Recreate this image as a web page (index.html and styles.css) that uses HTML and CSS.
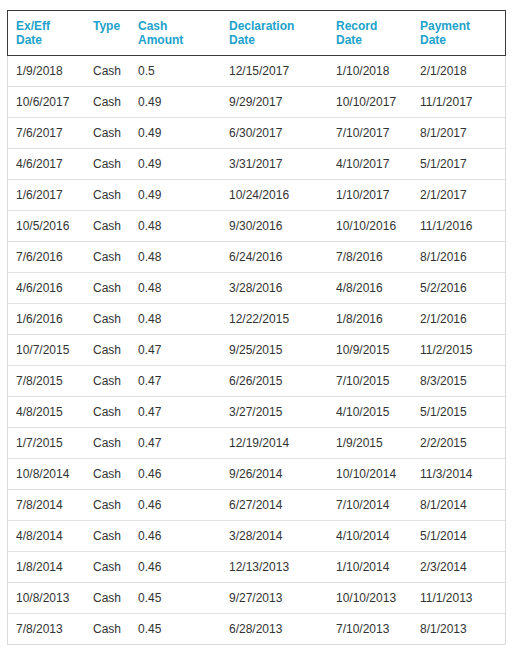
FILE: index.html
```
<!DOCTYPE html>
<html>
<head>
<meta charset="utf-8">
<link rel="stylesheet" href="styles.css">
</head>
<body>
<div class="tbl">
  <div class="row head">
    <div class="c">Ex/Eff<br>Date</div>
    <div class="c">Type</div>
    <div class="c">Cash<br>Amount</div>
    <div class="c">Declaration<br>Date</div>
    <div class="c">Record<br>Date</div>
    <div class="c">Payment<br>Date</div>
  </div>
  <div class="body">
    <div class="row"><div class="c">1/9/2018</div><div class="c">Cash</div><div class="c">0.5</div><div class="c">12/15/2017</div><div class="c">1/10/2018</div><div class="c">2/1/2018</div></div>
    <div class="row"><div class="c">10/6/2017</div><div class="c">Cash</div><div class="c">0.49</div><div class="c">9/29/2017</div><div class="c">10/10/2017</div><div class="c">11/1/2017</div></div>
    <div class="row"><div class="c">7/6/2017</div><div class="c">Cash</div><div class="c">0.49</div><div class="c">6/30/2017</div><div class="c">7/10/2017</div><div class="c">8/1/2017</div></div>
    <div class="row"><div class="c">4/6/2017</div><div class="c">Cash</div><div class="c">0.49</div><div class="c">3/31/2017</div><div class="c">4/10/2017</div><div class="c">5/1/2017</div></div>
    <div class="row"><div class="c">1/6/2017</div><div class="c">Cash</div><div class="c">0.49</div><div class="c">10/24/2016</div><div class="c">1/10/2017</div><div class="c">2/1/2017</div></div>
    <div class="row"><div class="c">10/5/2016</div><div class="c">Cash</div><div class="c">0.48</div><div class="c">9/30/2016</div><div class="c">10/10/2016</div><div class="c">11/1/2016</div></div>
    <div class="row"><div class="c">7/6/2016</div><div class="c">Cash</div><div class="c">0.48</div><div class="c">6/24/2016</div><div class="c">7/8/2016</div><div class="c">8/1/2016</div></div>
    <div class="row"><div class="c">4/6/2016</div><div class="c">Cash</div><div class="c">0.48</div><div class="c">3/28/2016</div><div class="c">4/8/2016</div><div class="c">5/2/2016</div></div>
    <div class="row"><div class="c">1/6/2016</div><div class="c">Cash</div><div class="c">0.48</div><div class="c">12/22/2015</div><div class="c">1/8/2016</div><div class="c">2/1/2016</div></div>
    <div class="row"><div class="c">10/7/2015</div><div class="c">Cash</div><div class="c">0.47</div><div class="c">9/25/2015</div><div class="c">10/9/2015</div><div class="c">11/2/2015</div></div>
    <div class="row"><div class="c">7/8/2015</div><div class="c">Cash</div><div class="c">0.47</div><div class="c">6/26/2015</div><div class="c">7/10/2015</div><div class="c">8/3/2015</div></div>
    <div class="row"><div class="c">4/8/2015</div><div class="c">Cash</div><div class="c">0.47</div><div class="c">3/27/2015</div><div class="c">4/10/2015</div><div class="c">5/1/2015</div></div>
    <div class="row"><div class="c">1/7/2015</div><div class="c">Cash</div><div class="c">0.47</div><div class="c">12/19/2014</div><div class="c">1/9/2015</div><div class="c">2/2/2015</div></div>
    <div class="row"><div class="c">10/8/2014</div><div class="c">Cash</div><div class="c">0.46</div><div class="c">9/26/2014</div><div class="c">10/10/2014</div><div class="c">11/3/2014</div></div>
    <div class="row"><div class="c">7/8/2014</div><div class="c">Cash</div><div class="c">0.46</div><div class="c">6/27/2014</div><div class="c">7/10/2014</div><div class="c">8/1/2014</div></div>
    <div class="row"><div class="c">4/8/2014</div><div class="c">Cash</div><div class="c">0.46</div><div class="c">3/28/2014</div><div class="c">4/10/2014</div><div class="c">5/1/2014</div></div>
    <div class="row"><div class="c">1/8/2014</div><div class="c">Cash</div><div class="c">0.46</div><div class="c">12/13/2013</div><div class="c">1/10/2014</div><div class="c">2/3/2014</div></div>
    <div class="row"><div class="c">10/8/2013</div><div class="c">Cash</div><div class="c">0.45</div><div class="c">9/27/2013</div><div class="c">10/10/2013</div><div class="c">11/1/2013</div></div>
    <div class="row"><div class="c">7/8/2013</div><div class="c">Cash</div><div class="c">0.45</div><div class="c">6/28/2013</div><div class="c">7/10/2013</div><div class="c">8/1/2013</div></div>
  </div>
</div>
</body>
</html>
```
FILE: styles.css
```
html, body {
  margin: 0;
  padding: 0;
  background: #fff;
}
body {
  font-family: "Liberation Sans", Arial, sans-serif;
  font-size: 12px;
  color: #333;
}
.tbl {
  width: 499px;
  margin: 10px 0 0 7px;
}
.row {
  display: grid;
  grid-template-columns: 77px 45px 91px 107px 84px 1fr;
  height: 30px;
  align-items: center;
  border-bottom: 1px solid #e0e0e0;
}
.row:last-child {
  border-bottom: none;
}
.c {
  padding-left: 8px;
  line-height: 14px;
  white-space: nowrap;
}
.head {
  height: auto;
  align-items: start;
  border: 1px solid #3a3a3a;
  padding: 8px 0;
  font-weight: bold;
  color: #1ca2cb;
}
.body {
  border: 1px solid #dadada;
  border-top: none;
}
```
